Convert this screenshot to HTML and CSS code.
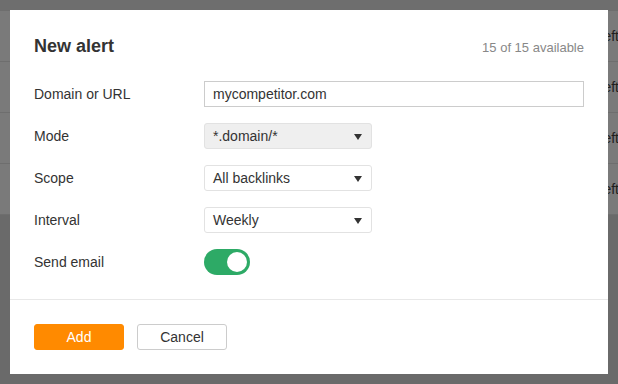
FILE: index.html
```html
<!DOCTYPE html>
<html>
<head>
<meta charset="utf-8">
<link rel="stylesheet" href="styles.css">
</head>
<body>
<div class="page">
  <div class="topbar"></div>
  <div class="rows">
    <div class="row">Left</div>
    <div class="row">Left</div>
    <div class="row">Left</div>
    <div class="row">Left</div>
  </div>
</div>
<div class="modal">
  <div class="header">
    <h2 class="title">New alert</h2>
    <span class="quota">15 of 15 available</span>
  </div>
  <div class="form">
    <label class="label">Domain or URL</label>
    <div class="input">mycompetitor.com</div>
    <label class="label">Mode</label>
    <div class="select select-gray"><span>*.domain/*</span><span class="arrow"></span></div>
    <label class="label">Scope</label>
    <div class="select"><span>All backlinks</span><span class="arrow"></span></div>
    <label class="label">Interval</label>
    <div class="select"><span>Weekly</span><span class="arrow"></span></div>
    <label class="label">Send email</label>
    <div class="toggle"><span class="knob"></span></div>
  </div>
  <div class="footer">
    <button class="btn btn-primary">Add</button>
    <button class="btn btn-default">Cancel</button>
  </div>
</div>
</body>
</html>
```
FILE: styles.css
```css
html, body {
  margin: 0;
  padding: 0;
  width: 618px;
  height: 384px;
  overflow: hidden;
  background: #6a6a6a;
  font-family: "Liberation Sans", Arial, sans-serif;
}
.page {
  width: 619px;
}
.topbar {
  height: 11px;
  background: #6e6e6e;
}
.rows {
  background: #7a7a7a;
}
.row {
  height: 50px;
  border-bottom: 1px solid #6e6e6e;
  display: flex;
  align-items: center;
  justify-content: flex-end;
  font-size: 14px;
  color: #1e1e1e;
}
.modal {
  position: absolute;
  left: 10px;
  top: 10px;
  width: 598px;
  height: 364px;
  background: #fff;
  box-sizing: border-box;
}
.header {
  display: flex;
  justify-content: space-between;
  align-items: baseline;
  padding: 24px 24px 0 24px;
  height: 48px;
  box-sizing: border-box;
}
.title {
  margin: 0;
  font-size: 18px;
  line-height: 24px;
  font-weight: bold;
  color: #333;
}
.quota {
  font-size: 13px;
  color: #888;
}
.form {
  display: grid;
  grid-template-columns: 170px 380px;
  grid-auto-rows: 26px;
  row-gap: 16px;
  align-items: center;
  padding: 23px 24px 24px 24px;
  border-bottom: 1px solid #e8e8e8;
}
.label {
  font-size: 14px;
  color: #333;
}
.input {
  height: 26px;
  box-sizing: border-box;
  border: 1px solid #cccccc;
  padding: 0 8px;
  font-size: 14px;
  line-height: 24px;
  color: #333;
}
.select {
  width: 168px;
  height: 26px;
  box-sizing: border-box;
  border: 1px solid #e2e2e2;
  border-radius: 3px;
  padding: 0 9px 0 8px;
  display: flex;
  align-items: center;
  justify-content: space-between;
  font-size: 14px;
  color: #333;
  background: #fff;
}
.select-gray {
  background: #efefef;
}
.arrow {
  width: 0;
  height: 0;
  border-left: 4px solid transparent;
  border-right: 4px solid transparent;
  border-top: 6px solid #333;
  margin-top: 1px;
}
.toggle {
  width: 46px;
  height: 26px;
  border-radius: 13px;
  background: #2daa66;
  display: flex;
  align-items: center;
  justify-content: flex-end;
  padding: 0 3px;
  box-sizing: border-box;
}
.knob {
  width: 20px;
  height: 20px;
  border-radius: 50%;
  background: #fff;
}
.footer {
  display: flex;
  gap: 13px;
  padding: 24px;
}
.btn {
  width: 90px;
  height: 26px;
  border-radius: 3px;
  font-family: "Liberation Sans", Arial, sans-serif;
  font-size: 14px;
  padding: 0;
  cursor: pointer;
}
.btn-primary {
  background: #ff8a00;
  border: 1px solid #ff8a00;
  color: #fff;
}
.btn-default {
  background: #fff;
  border: 1px solid #cccccc;
  color: #333;
}
```
